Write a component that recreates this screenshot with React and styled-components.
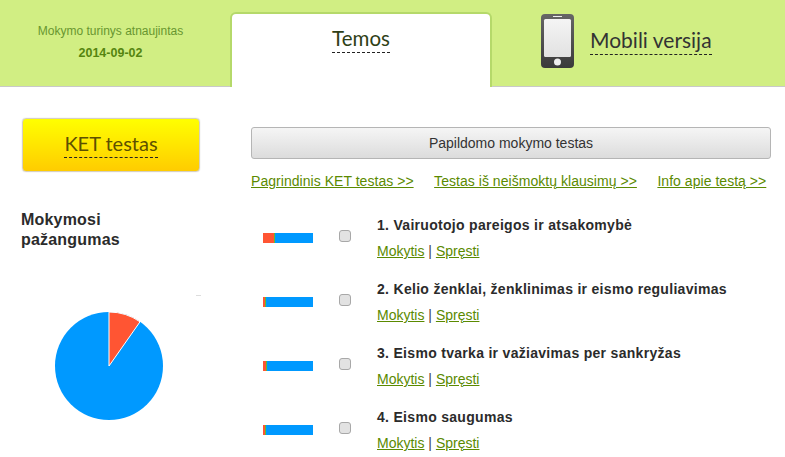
import React from "react";
import styled, { createGlobalStyle } from "styled-components";

const Global = createGlobalStyle`
  html, body { margin: 0; padding: 0; background: #fff; overflow: hidden; }
  body { font-family: "Liberation Sans", Arial, sans-serif; color: #2b2b2b; }
`;
const Page = styled.div`width: 785px; height: 457px; overflow: hidden; display: flex; flex-direction: column;`;
const Header = styled.header`
  height: 86px; flex: none; background: #d1ee83; border-bottom: 1px solid #c9c9c9;
  display: flex; align-items: flex-end;
`;
const Updated = styled.div`
  width: 221px; margin-right: 9px; height: 86px; box-sizing: border-box; padding-top: 24px; text-align: center;
  font-size: 12px; color: #68962f; flex: none;
`;
const UpdatedDate = styled.div`font-weight: bold; font-size: 12.5px; margin-top: 8px; color: #558510;`;
const ActiveTab = styled.div`
  width: 262px; height: 75px; box-sizing: border-box; flex: none; background: #fff;
  border: 2px solid #b5d96a; border-bottom: 0; border-radius: 6px 6px 0 0; margin-bottom: -1px;
  display: flex; justify-content: center; padding-top: 11px;
`;
const DashLabel = styled.span`
  font-family: Lato, "Open Sans", sans-serif; font-size: ${p => p.$size}px; line-height: 26px;
  color: ${p => p.$color}; border-bottom: 1px dashed #222; height: 27px; display: inline-block;
`;
const MobileTab = styled.div`
  flex: 1; height: 86px; box-sizing: border-box; display: flex; align-items: center; padding: 0 0 5px 49px; gap: 15px;
`;
const Body = styled.main`flex: 1; display: flex; min-height: 0;`;
const Sidebar = styled.aside`width: 251px; flex: none; box-sizing: border-box; padding: 31px 0 0 22px;`;
const KetButton = styled.div`
  width: 178px; height: 54px; box-sizing: border-box; border: 1px solid #d6cfc0; border-radius: 4px;
  background: linear-gradient(#ffff00, #ffcc00); display: flex; justify-content: center; padding-top: 11px;
  box-shadow: 0 0 1px #bbb;
`;
const SideTitle = styled.h2`
  margin: 38px 0 0 -1px; font-size: 16px; line-height: 20px; font-weight: bold; color: #2b2b2b; letter-spacing: .2px;
`;
const PieWrap = styled.div`position: relative; margin: 44px 0 0 -1px; padding: 16px 0 0 32px;`;
const Tick = styled.i`position: absolute; left: 175px; top: 1px; width: 5px; height: 1px; background: #ddd;`;
const PieSvg = styled.svg`display: block;`;
const Content = styled.section`flex: 1; padding: 40px 14px 0 0;`;
const GreyButton = styled.div`
  height: 32px; box-sizing: border-box; border: 1px solid #b5b5b5; border-radius: 3px;
  background: linear-gradient(#f5f5f5, #dcdcdc); text-align: center; line-height: 30px;
  font-size: 14px; color: #333;
`;
const TopLinks = styled.nav`display: flex; gap: 20.5px; margin-top: 14px; font-size: 14px; line-height: 17px; letter-spacing: .04px;`;
const Link = styled.a`color: #5b8a00; text-decoration: underline;`;
const List = styled.div`margin-top: 27px;`;
const Row = styled.div`height: 64px; display: flex;`;
const Bar = styled.div`
  width: 50px; height: 10px; margin: 16px 0 0 12px; flex: none; display: flex; background: #0099ff;
`;
const Seg = styled.span`display: block; height: 100%; background: ${p => p.$c};`;
const Check = styled.input.attrs({ type: "checkbox" })`
  appearance: none; width: 12px; height: 12px; margin: 13px 0 0 26px; flex: none; box-sizing: border-box;
  border: 1px solid #a8a8a8; border-radius: 3px; background: #e2e2e2;
`;
const Info = styled.div`margin-left: 26px;`;
const RowTitle = styled.div`font-size: 14px; font-weight: bold; line-height: 17px; color: #2b2b2b; letter-spacing: .3px;`;
const RowLinks = styled.div`margin-top: 9px; font-size: 14px; line-height: 17px; color: #444;`;

const rows = [
  ["1. Vairuotojo pareigos ir atsakomybė", 11, 1],
  ["2. Kelio ženklai, ženklinimas ir eismo reguliavimas", 2, 1],
  ["3. Eismo tvarka ir važiavimas per sankryžas", 3, 1],
  ["4. Eismo saugumas", 2, 1],
];

const Phone = () => (
  <svg width="34" height="54" viewBox="0 0 34 54">
    <defs>
      <linearGradient id="ph" x1="0" y1="0" x2="0" y2="1"><stop offset="0" stopColor="#666" /><stop offset="1" stopColor="#3a3a3a" /></linearGradient>
      <linearGradient id="sc" x1="0" y1="0" x2="0" y2="1"><stop offset="0" stopColor="#f4f4f4" /><stop offset="1" stopColor="#e2e2e2" /></linearGradient>
    </defs>
    <rect width="33" height="54" rx="4" fill="url(#ph)" />
    <rect x="3" y="5" width="27" height="38" rx="1.5" fill="url(#sc)" />
    <rect x="12" y="2" width="9" height="1" fill="#eee" />
    <circle cx="16.5" cy="48" r="3.5" fill="#eee" />
  </svg>
);

export default function App() {
  return (
    <Page>
      <Global />
      <Header>
        <Updated>
          <div>Mokymo turinys atnaujintas</div>
          <UpdatedDate>2014-09-02</UpdatedDate>
        </Updated>
        <ActiveTab><DashLabel $size={20.5} $color="#2f3f17">Temos</DashLabel></ActiveTab>
        <MobileTab><Phone /><DashLabel $size={21} $color="#333">Mobili versija</DashLabel></MobileTab>
      </Header>
      <Body>
        <Sidebar>
          <KetButton><DashLabel $size={20} $color="#5d5000">KET testas</DashLabel></KetButton>
          <SideTitle>Mokymosi<br />pažangumas</SideTitle>
          <PieWrap>
            <Tick />
            <PieSvg width="120" height="120" viewBox="0 0 120 120">
              <circle cx="56" cy="56" r="54" fill="#0099ff" />
              <path d="M56 56 L56 2 A54 54 0 0 1 87 11.8 Z" fill="#ff5533" stroke="#fff" strokeWidth="1" />
            </PieSvg>
          </PieWrap>
        </Sidebar>
        <Content>
          <GreyButton>Papildomo mokymo testas</GreyButton>
          <TopLinks>
            <Link>Pagrindinis KET testas &gt;&gt;</Link>
            <Link>Testas iš neišmoktų klausimų &gt;&gt;</Link>
            <Link>Info apie testą &gt;&gt;</Link>
          </TopLinks>
          <List>
            {rows.map(([title, red, green]) => (
              <Row key={title}>
                <Bar>
                  <Seg $c="#ff5533" style={{ width: red }} />
                  <Seg $c="#66bb33" style={{ width: green }} />
                </Bar>
                <Check />
                <Info>
                  <RowTitle>{title}</RowTitle>
                  <RowLinks><Link>Mokytis</Link> | <Link>Spręsti</Link></RowLinks>
                </Info>
              </Row>
            ))}
          </List>
        </Content>
      </Body>
    </Page>
  );
}
